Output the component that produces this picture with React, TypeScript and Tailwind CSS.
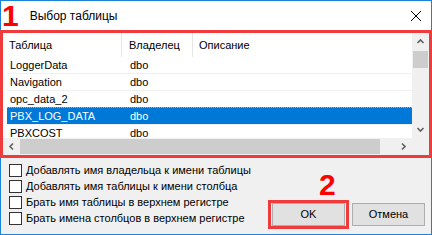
import React from "react";

interface IRow {
  name: string;
  owner: string;
  selected?: boolean;
}

const rows: IRow[] = [
  { name: "LoggerData", owner: "dbo" },
  { name: "Navigation", owner: "dbo" },
  { name: "opc_data_2", owner: "dbo" },
  { name: "PBX_LOG_DATA", owner: "dbo", selected: true },
  { name: "PBXCOST", owner: "dbo" },
];

const options = [
  "Добавлять имя владельца к имени таблицы",
  "Добавлять имя таблицы к имени столбца",
  "Брать имя таблицы в верхнем регистре",
  "Брать имена столбцов в верхнем регистре",
];

const Chevron = ({ dir }: { dir: "up" | "down" | "left" | "right" }) => {
  const d = {
    up: "M1.5 6 L4.5 3 L7.5 6",
    down: "M1.5 3 L4.5 6 L7.5 3",
    left: "M6 1.5 L3 4.5 L6 7.5",
    right: "M3 1.5 L6 4.5 L3 7.5",
  }[dir];
  return (
    <svg width="9" height="9" viewBox="0 0 9 9">
      <path d={d} fill="none" stroke="#606060" strokeWidth="1.6" />
    </svg>
  );
};

const App = () => {
  return (
    <div
      className="w-[432px] h-[235px] flex flex-col text-black"
      style={{ fontFamily: '"Liberation Sans", Arial, sans-serif' }}
    >
      {/* title bar */}
      <div className="h-[30px] bg-white border-x border-t border-[#1883d7] flex items-center">
        <span className="ml-[1px] text-[30px] font-bold leading-none text-[#ff0000]">1</span>
        <span className="ml-[11px] text-[12px]">Выбор таблицы</span>
        <svg className="ml-auto mr-[10px]" width="10" height="10" viewBox="0 0 10 10">
          <path d="M0 0 L10 10 M10 0 L0 10" stroke="#000" strokeWidth="1" />
        </svg>
      </div>

      {/* table list */}
      <div className="h-[128px] border-[3px] border-[#ef3b3b] flex flex-col bg-white">
        <div className="flex h-[105px]">
          <div className="flex-1 flex flex-col overflow-hidden text-[11px]">
            <div className="h-[24px] flex shrink-0">
              <div className="w-[119px] pl-[6px] flex items-center border-r border-[#e5e5e5]">Таблица</div>
              <div className="w-[71px] pl-[7px] flex items-center border-r border-[#e5e5e5]">Владелец</div>
              <div className="flex-1 pl-[6px] flex items-center">Описание</div>
            </div>
            <div className="flex flex-col ml-[4px]">
              {rows.map((row, i) => {
                const nextSelected = rows[i + 1]?.selected;
                return (
                  <div key={i} className="flex flex-col shrink-0">
                    <div
                      className={
                        row.selected
                          ? "h-[16px] flex items-center bg-[#0078d7] text-white"
                          : "h-[16px] flex items-center"
                      }
                    >
                      <div className="w-[115px] pl-[3px]">{row.name}</div>
                      <div className="w-[71px] pl-[8px]">{row.owner}</div>
                    </div>
                    {nextSelected ? (
                      <div className="h-[1px] bg-[repeating-linear-gradient(90deg,#f5a04b_0_1px,#0078d7_1px_2px)]" />
                    ) : (
                      <div className="h-[1px] bg-[#f0f0f0]" />
                    )}
                  </div>
                );
              })}
            </div>
          </div>
          <div className="w-[17px] bg-[#f0f0f0] flex flex-col">
            <div className="h-[17px] flex items-center justify-center">
              <Chevron dir="up" />
            </div>
            <div className="h-[17px] mx-[1px] mt-[1px] bg-[#cdcdcd]" />
            <div className="flex-1" />
            <div className="h-[17px] flex items-center justify-center">
              <Chevron dir="down" />
            </div>
          </div>
        </div>
        <div className="flex h-[17px] bg-[#f0f0f0]">
          <div className="w-[17px] flex items-center justify-center">
            <Chevron dir="left" />
          </div>
          <div className="w-[360px] my-[1px] bg-[#cdcdcd]" />
          <div className="flex-1" />
          <div className="w-[17px] flex items-center justify-center">
            <Chevron dir="right" />
          </div>
          <div className="w-[17px] bg-[#f0f0f0]" />
        </div>
      </div>

      {/* options and buttons */}
      <div className="flex-1 bg-[#f0f0f0] border-x border-b border-[#1883d7] flex text-[11px]">
        <div className="flex-1 flex flex-col pt-[4px] pl-[8px]">
          {options.map((text, i) => (
            <div key={i} className="h-[16px] flex items-center gap-[4px]">
              <div className="w-[13px] h-[13px] border border-[#333] bg-white" />
              <span>{text}</span>
            </div>
          ))}
        </div>
        <div className="flex flex-col justify-end pr-[6px] pb-[5px]">
          <span className="ml-[51px] text-[30px] font-bold leading-none text-[#ff0000]">2</span>
          <div className="flex items-end gap-[3px]">
            <div className="border-[3px] border-[#ef3b3b] px-[1px]">
              <div className="w-[73px] h-[23px] bg-[#e1e1e1] border border-[#adadad] flex items-center justify-center">
                OK
              </div>
            </div>
            <div className="mb-[3px] w-[73px] h-[23px] bg-[#e1e1e1] border border-[#adadad] flex items-center justify-center">
              Отмена
            </div>
          </div>
        </div>
      </div>
    </div>
  );
};

export default App;
